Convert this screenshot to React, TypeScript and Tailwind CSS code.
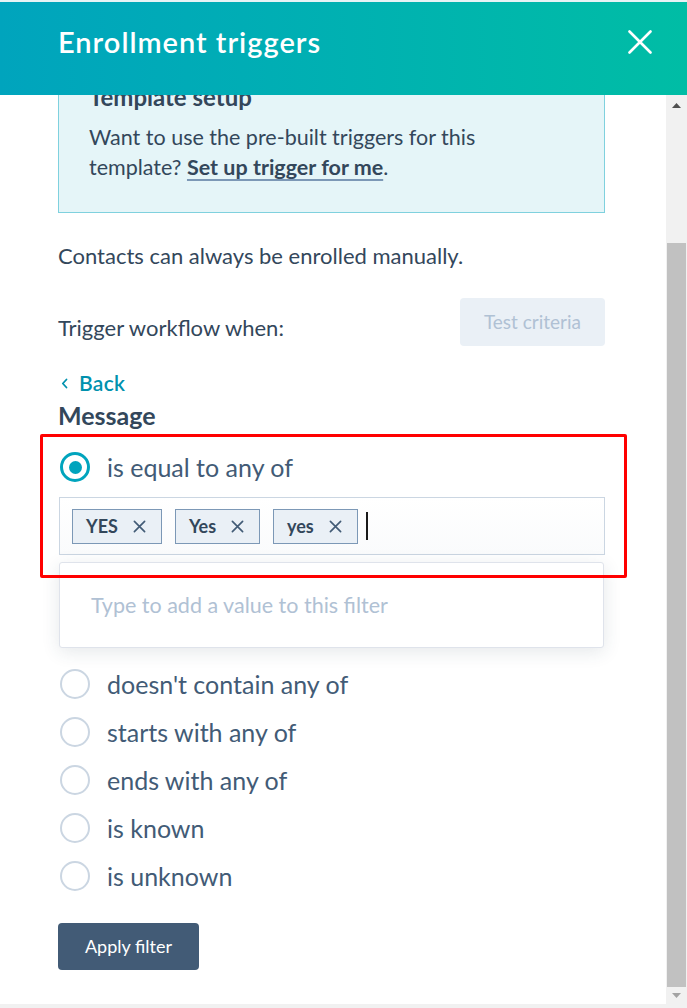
import React from "react";

const font = { fontFamily: "Lato, 'Noto Sans', sans-serif" };

function XIcon({ size = 14, stroke = 2, color = "#33475b" }: { size?: number; stroke?: number; color?: string }) {
  return (
    <svg width={size} height={size} viewBox="0 0 14 14" fill="none">
      <path d="M1.5 1.5 L12.5 12.5 M12.5 1.5 L1.5 12.5" stroke={color} strokeWidth={stroke} strokeLinecap="round" />
    </svg>
  );
}

function Tag({ label }: { label: string }) {
  return (
    <div className="flex h-[35px] items-center gap-[15px] border border-[#7c98b6] bg-[#eaf0f6] pl-[13px] pr-[15px] text-[18px] font-bold text-[#33475b]">
      <span>{label}</span>
      <XIcon size={13} stroke={1.8} color="#425b76" />
    </div>
  );
}

function Radio({ label, checked = false }: { label: string; checked?: boolean }) {
  return (
    <div className="ml-[2px] flex h-[30px] items-center gap-[17px]">
      {checked ? (
        <div className="flex h-[30px] w-[30px] shrink-0 items-center justify-center rounded-full border-[3px] border-[#00a4bd]">
          <div className="h-[13px] w-[13px] rounded-full bg-[#00a4bd]" />
        </div>
      ) : (
        <div className="h-[30px] w-[30px] shrink-0 rounded-full border-[2px] border-[#cbd6e2]" />
      )}
      <span className="text-[25px] leading-[30px] text-[#425b76]">{label}</span>
    </div>
  );
}

export default function App() {
  return (
    <div className="relative flex h-[1008px] w-[687px] flex-col overflow-hidden bg-white" style={font}>
      {/* Header */}
      <div className="relative z-10 flex h-[95px] shrink-0 items-center justify-between border-t-[2px] border-[#e6f3f5] bg-gradient-to-r from-[#00a4bd] to-[#00bda5] pb-[14px] pl-[58px] pr-[35px]">
        <h1 className="text-[29px] font-semibold leading-none tracking-[1px] text-white">Enrollment triggers</h1>
        <svg width="24" height="24" viewBox="0 0 24 24" fill="none">
          <path d="M1.5 1.5 L22.5 22.5 M22.5 1.5 L1.5 22.5" stroke="white" strokeWidth="2.6" strokeLinecap="round" />
        </svg>
      </div>

      {/* Body */}
      <div className="flex min-h-0 flex-1">
        <div className="min-w-0 flex-1 overflow-hidden pl-[58px] pr-[61px]">
          <div className="mt-[-12px] text-[#33475b]">
            {/* Template setup box */}
            <div className="border border-t-0 border-[#7fd1de] bg-[#e5f5f8] px-[30px] pb-[30px]">
              <div className="text-[24px] font-bold leading-[28px] text-[#33475b]">Template setup</div>
              <p className="mt-[11px] text-[21.5px] leading-[30px] text-[#33475b]">
                Want to use the pre-built triggers for this
                <br />
                template?{" "}
                <span className="font-bold underline decoration-[#7c98b6] decoration-2 underline-offset-4">Set up trigger for me</span>.
              </p>
            </div>

            <p className="mt-[30px] text-[22px] leading-[26px] text-[#33475b]">Contacts can always be enrolled manually.</p>

            <div className="mt-[29px] flex items-start justify-between">
              <span className="mt-[17px] text-[22px] leading-[26px] text-[#33475b]">Trigger workflow when:</span>
              <div className="flex h-[48px] w-[145px] items-center justify-center rounded-[4px] bg-[#eaf0f6] text-[19px] text-[#b0c1d4]">
                Test criteria
              </div>
            </div>

            <div className="mt-[25px] flex h-[24px] items-center gap-[11px] pl-[3px] text-[21px] font-semibold tracking-[0.3px] text-[#0091ae]">
              <svg width="7" height="11" viewBox="0 0 7 11" fill="none">
                <path d="M5.5 1.5 L1.8 5.5 L5.5 9.5" stroke="#0091ae" strokeWidth="1.8" strokeLinecap="round" strokeLinejoin="round" />
              </svg>
              <span>Back</span>
            </div>

            <div className="mt-[5px] text-[25px] font-bold leading-[30px] text-[#33475b]">Message</div>

            <div className="mt-[22px]">
              <Radio label="is equal to any of" checked />
            </div>

            <div className="ml-[1px] mt-[15px] flex h-[58px] items-center gap-[13px] border border-[#cbd6e2] bg-gradient-to-b from-white to-[#fafbfc] pl-[12px] pr-[12px]">
              <Tag label="YES" />
              <Tag label="Yes" />
              <Tag label="yes" />
              <div className="-ml-[5px] h-[28px] w-[2px] bg-[#1a1a1a]" />
            </div>

            <div className="relative ml-[1px] mr-[1px] mt-[7px] flex h-[86px] items-center rounded-[3px] border border-[#dfe3eb] bg-white pl-[31px] shadow-[0_4px_18px_rgba(45,62,80,0.12)]">
              <span className="text-[21.5px] text-[#b0c1d4]">Type to add a value to this filter</span>
            </div>

            <div className="mt-[21px] flex flex-col gap-[18px]">
              <Radio label="doesn't contain any of" />
              <Radio label="starts with any of" />
              <Radio label="ends with any of" />
              <Radio label="is known" />
              <Radio label="is unknown" />
            </div>

            <button className="mt-[32px] flex h-[47px] w-[141px] items-center justify-center rounded-[4px] bg-[#425b76] text-[18px] text-white">
              Apply filter
            </button>
          </div>
        </div>

        {/* Scrollbar */}
        <div className="flex w-[21px] shrink-0 flex-col bg-[#f1f1f1]">
          <div className="flex h-[21px] items-center justify-center">
            <svg width="9" height="5" viewBox="0 0 9 5"><path d="M0 5 L4.5 0 L9 5 Z" fill="#505050" /></svg>
          </div>
          <div className="h-[127px]" />
          <div className="mx-[1px] flex-1 bg-[#c1c1c1]" />
          <div className="flex h-[17px] items-center justify-center">
            <svg width="9" height="5" viewBox="0 0 9 5"><path d="M0 0 L4.5 5 L9 0 Z" fill="#a3a3a3" /></svg>
          </div>
        </div>
      </div>
      <div className="h-[4px] shrink-0 bg-[#f1f1f1]" />

      {/* Red annotation box */}
      <div className="pointer-events-none absolute left-[40px] top-[434px] h-[144px] w-[587px] rounded-[2px] border-[3px] border-[#ff0000]" />
    </div>
  );
}
